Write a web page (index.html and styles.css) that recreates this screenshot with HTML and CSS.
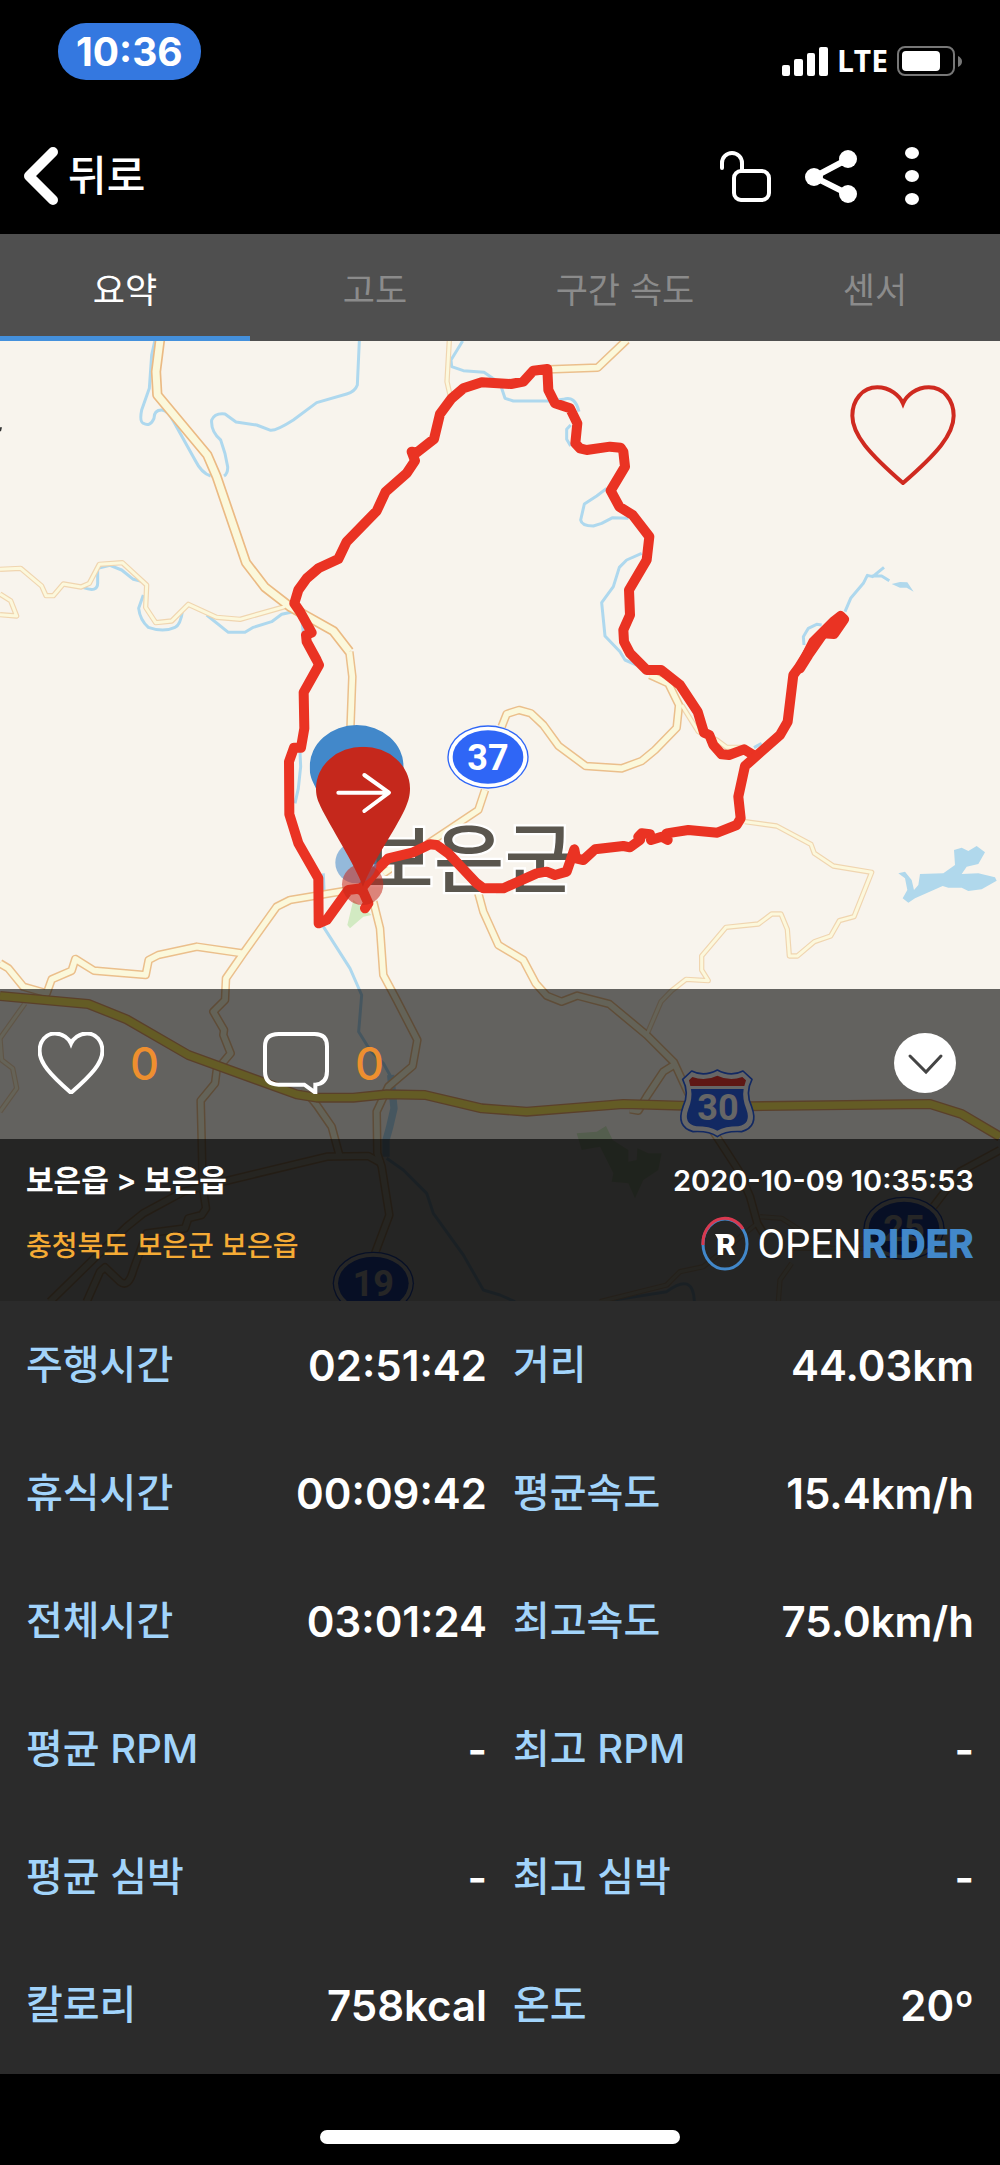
FILE: index.html
```html
<!DOCTYPE html>
<html lang="ko">
<head>
  <meta charset="UTF-8" />
  <meta name="viewport" content="width=device-width, initial-scale=1.0"/>
  <title>OPENRIDER</title>
  <link rel="stylesheet" href="styles.css">
</head>
<body>

<!-- shared shapes -->
<svg class="defs" aria-hidden="true">
  <symbol id="heart" viewBox="0 0 320 302">
    <path vector-effect="non-scaling-stroke" d="M160 56C150 32 120 7 82 7C38 7 7 45 7 93C7 150 58 207 160 296C262 207 313 150 313 93C313 45 282 7 238 7C200 7 170 32 160 56Z"/>
  </symbol>
  <symbol id="pin" viewBox="0 0 282 420">
    <path d="M141 420C118 355 40 235 14 180C3 157 0 145 0 125A141 125 0 0 1 282 125C282 145 279 160 267 187C238 250 164 355 141 420Z"/>
  </symbol>
</svg>

<div class="status">
  <span class="clock">10:36</span>
  <div class="status-icons">
    <svg width="46" height="30" viewBox="0 0 46 30" fill="#fff">
      <rect x="0" y="19" width="8" height="11" rx="2"/>
      <rect x="12" y="13" width="9" height="17" rx="2"/>
      <rect x="25" y="7" width="8" height="23" rx="2"/>
      <rect x="37" y="1" width="9" height="29" rx="2"/>
    </svg>
    <span class="lte">LTE</span>
    <svg width="65" height="30" viewBox="0 0 65 30">
      <rect x="1" y="1" width="56" height="28" rx="7" fill="none" stroke="#777" stroke-width="2"/>
      <rect x="5" y="5" width="38" height="20" rx="4" fill="#fff"/>
      <path d="M61 10q4 2 4 5.500t-4 5.500z" fill="#777"/>
    </svg>
  </div>
</div>

<header class="topbar">
  <button class="back">
    <svg width="34" height="58" viewBox="0 0 34 58"><path d="M29 5L5 29L29 53" fill="none" stroke="#fff" stroke-width="10" stroke-linecap="round" stroke-linejoin="round"/></svg>
    뒤로
  </button>
  <div class="tools">
    <button aria-label="잠금 해제">
      <svg width="51" height="53" viewBox="0 0 51 53" fill="none" stroke="#fff" stroke-width="4" stroke-linecap="round">
        <rect x="14" y="21" width="35" height="29" rx="7"/>
        <path d="M2 18V13a10 10 0 0 1 20 0v8"/>
      </svg>
    </button>
    <button aria-label="공유">
      <svg width="52" height="53" viewBox="0 0 52 53">
        <path d="M43 9L9 27L43 44" fill="none" stroke="#fff" stroke-width="6"/>
        <g fill="#fff"><circle cx="43" cy="9" r="9"/><circle cx="9" cy="27" r="9"/><circle cx="43" cy="44" r="9"/></g>
      </svg>
    </button>
    <button aria-label="더보기">
      <svg width="42" height="58" viewBox="0 0 42 58" fill="#fff">
        <ellipse cx="21" cy="6" rx="7" ry="6"/><ellipse cx="21" cy="29" rx="7" ry="6"/><ellipse cx="21" cy="52" rx="7" ry="6"/>
      </svg>
    </button>
  </div>
</header>

<nav class="tabs">
  <button class="active">요약</button>
  <button>고도</button>
  <button>구간 속도</button>
  <button>센서</button>
</nav>

<section class="map">
  <svg class="map-canvas" viewBox="0 3 3000 2880" aria-hidden="true">
    <defs>
      <g id="water">
        <path d="M465 0L455 45L448 145L425 210Q418 245 430 250Q450 262 462 235Q462 210 485 210Q502 210 520 243L585 360Q605 400 632 408"/>
        <path d="M1078 3L1072 135Q1065 155 1040 162L950 188L880 240Q830 272 812 271L770 255L708 246L675 222Q645 218 635 240Q632 275 662 300Q677 340 683 380Q684 400 672 408"/>
        <path d="M1388 3L1353 60L1355 80L1390 92L1452 97L1500 130L1515 175L1540 183H1650L1690 178Q1725 165 1737 215M1712 255L1700 268V298L1712 318"/>
        <path d="M1820 445L1790 468L1753 492L1742 540Q1745 558 1780 558L1805 550L1838 533L1885 535"/>
        <path d="M1925 640L1880 660L1858 682L1840 740L1805 788L1815 888L1860 935L1875 960L1910 975"/>
        <path d="M2535 815L2552 775L2590 730L2602 706L2618 710L2652 682M2615 708L2645 708L2668 722M2412 915L2410 890L2425 865L2450 853L2465 855"/>
        <path d="M250 743Q293 758 293 730V685L330 676L365 690L400 718L430 725M430 765L416 805Q420 840 445 862Q490 878 525 862Q542 855 548 810M620 825L685 877H735L760 862L815 845L845 823L880 815M905 830L910 880"/>
        <path d="M900 1235L902 1280L895 1345L885 1390M970 1600L972 1650M970 1760L1050 1885L1085 1965L1076 2075L1110 2130L1150 2170L1175 2215"/>
        <path d="M1160 2455L1210 2490L1280 2560L1300 2620L1390 2745L1450 2850L1500 2865L1545 2885M1830 2882L2000 2855Q2080 2795 2083 2885M2262 1223L2285 1210"/>
      </g>
      <g id="thin">
        <path d="M0 688L62 685L125 738L138 767H160L190 732L243 741L268 730L298 673L367 668L440 735L437 802L467 848L515 843L565 793L650 832L720 838L855 800"/>
        <path d="M0 762L32 782L50 828L0 824M1348 0L1341 125L1350 165M75 1990L0 2095L5 2160L38 2185L50 2245L0 2315"/>
        <path d="M2045 1095L2095 1175L2150 1200L2180 1222H2240"/>
        <path d="M1940 2085L1983 1985L2015 1952L2058 1918L2125 1922L2105 1890V1848L2178 1762L2275 1752L2315 1722H2343L2362 1768L2368 1848H2392L2443 1805L2492 1788L2518 1742L2562 1730L2615 1597L2500 1578L2443 1540L2433 1513L2330 1458L2235 1445"/>
        <path d="M2272 2650L2110 2780L2040 2795L2000 2835L1800 2885M2280 2630L2345 2635L2400 2670M2375 2770L2340 2820L2335 2885M2370 2725H2620"/>
      </g>
      <g id="roads">
        <path d="M1645 88L1793 83L1880 0"/>
        <path d="M1048 935L1057 1010L1050 1200M1120 1685L1140 1765L1150 1905L1190 1980L1252 2100L1238 2178L1165 2240L1130 2315L1132 2440L1145 2480L1168 2625L1125 2740"/>
        <path d="M0 1870L25 1885L70 1940L140 1960L155 1918L215 1892L226 1857L282 1892L437 1905L446 1860L475 1845L590 1820L727 1840"/>
        <path d="M1050 1650L870 1680L830 1700L730 1840L678 1915L675 1980L640 2015L672 2070L670 2085L692 2140L650 2190L645 2230L602 2282L605 2400L608 2540L618 2605L605 2625L565 2635L555 2665L440 2680L400 2790Q385 2845 360 2825L315 2782L300 2795L260 2885"/>
        <path d="M150 2885L380 2660L430 2620L550 2555L690 2520L980 2450L1105 2448L1145 2470M910 2245L950 2295L995 2360L1018 2445"/>
        <path d="M1505 1160L1520 1122L1557 1110L1593 1120L1630 1155L1675 1217L1757 1278L1865 1285L1925 1263L1965 1230L2030 1163L2037 1095L2005 1030L1950 1005"/>
        <path d="M1455 1350L1435 1410L1300 1500L1150 1600M1435 1660L1450 1715L1495 1815L1570 1860L1607 1930L1640 1967L1685 1985L1732 1967L1828 1992L1940 2085L2022 2167L2065 2260L2150 2390L2215 2490L2250 2570L2272 2650L2290 2680"/>
        <path d="M2022 2175L1990 2195L1940 2270L1915 2312L1890 2308M3000 2430L2880 2495L2800 2600"/>
      </g>
      <path id="mainroad" d="M480 0L468 95L472 165L622 345L650 410L738 668L795 742L870 800L1000 873L1048 935"/>
      <path id="highway" d="M0 1968L265 1992L380 2038L565 2145L890 2263L950 2273H1060L1160 2263L1275 2265L1445 2305L1580 2315L1870 2292L2150 2300L2790 2292L2885 2322L3000 2390"/>
      <g id="oval">
        <ellipse rx="122" ry="95" fill="#2f66f6"/>
        <ellipse rx="118" ry="91" fill="#fff"/>
        <ellipse rx="106" ry="80" fill="#2f66f6"/>
      </g>
    </defs>

    <rect y="3" width="3000" height="2880" fill="#f8f4ed"/>
    <path d="M0 262H6L3 274H0Z" fill="#333"/>

    <!-- parks and lakes -->
    <g fill="#d2eac2">
      <path d="M1730 2380L1790 2375L1818 2358L1838 2400L1885 2430V2465L1910 2460L1912 2425L1945 2440H1985L1975 2490L1930 2520L1905 2575L1885 2530L1835 2525L1840 2500L1800 2420L1745 2430Z"/>
      <path d="M1060 1680L1115 1725L1090 1730L1050 1765L1042 1755Z"/>
    </g>
    <g fill="#b0d8ec">
      <path d="M2675 732L2700 726L2722 727L2741 755L2720 743H2700Z"/>
      <path d="M2695 1600L2715 1595L2735 1620L2742 1650L2755 1635L2760 1602L2830 1600L2865 1575L2862 1530L2885 1523L2905 1533L2930 1518L2955 1537L2935 1572L2900 1580L2885 1602L2935 1600L2985 1612L2990 1622L2945 1648L2905 1653L2885 1643H2845L2828 1638L2745 1675L2725 1688L2708 1675L2722 1650L2715 1615Z"/>
    </g>
    <use href="#water" class="water"/>
    <path d="M1172 2205L1182 2305L1168 2365L1158 2400V2450" class="river"/>

    <!-- roads: casing first, then fill -->
    <use href="#thin" class="thin-case"/>
    <use href="#roads" class="road-case"/>
    <use href="#mainroad" class="main-case"/>
    <use href="#thin" class="thin-fill"/>
    <use href="#roads" class="road-fill"/>
    <use href="#mainroad" class="main-fill"/>
    <use href="#highway" class="highway-case"/>
    <use href="#highway" class="highway-fill"/>

    <!-- road numbers -->
    <use href="#oval" x="1464" y="1251"/>
    <use href="#oval" x="1120" y="2830"/>
    <use href="#oval" x="2712" y="2665"/>
    <g stroke-linejoin="round">
      <path d="M2075 2193Q2112 2212 2152 2190Q2192 2212 2229 2193L2256 2218Q2235 2258 2255 2300Q2277 2360 2225 2375Q2177 2372 2152 2390Q2127 2372 2079 2375Q2027 2360 2049 2300Q2069 2258 2048 2218Z" fill="#fff" stroke="#2f66f6" stroke-width="5"/>
      <path d="M2077 2211Q2115 2225 2152 2207Q2189 2225 2227 2211L2238 2221L2233 2238H2071L2067 2221Z" fill="#ea3b32"/>
      <path d="M2073 2247H2231Q2226 2275 2239 2307Q2255 2352 2215 2359Q2175 2359 2152 2372Q2129 2359 2089 2359Q2049 2352 2065 2307Q2078 2275 2073 2247Z" fill="#2f66f6"/>
    </g>
    <g class="road-no">
      <text x="1464" y="1290">37</text>
      <text x="1120" y="2867">19</text>
      <text x="2712" y="2702">25</text>
      <text x="2154" y="2339">30</text>
    </g>

    <text class="place" x="1090" y="1640">보은군</text>

    <!-- recorded track -->
    <g class="track">
      <path d="M1095 1705L1105 1690L1085 1645L1045 1650L980 1740L956 1750L955 1615L895 1510L868 1423L867 1265L882 1223L903 1223L913 1165L911 1057L957 975L950 960L920 905L918 885L935 878L900 815L883 790L895 750L920 715L955 685L1015 657L1040 605L1130 513L1157 455L1220 400L1245 362L1235 335L1250 338L1302 297L1320 222L1355 175L1390 145L1445 127L1533 132L1570 125L1600 92L1642 87L1645 150L1665 190L1710 205L1732 250L1726 310L1740 325L1760 330L1830 320L1862 323L1870 335L1875 380L1832 452L1858 500L1898 525L1948 590L1940 660L1887 750L1890 825L1870 870L1872 905L1890 940L1940 990L1983 990L2040 1035L2093 1115L2112 1178L2128 1185L2140 1215L2165 1243L2187 1245L2232 1228L2260 1245"/>
      <path d="M2522 832L2445 905L2395 985L2380 1005L2363 1145L2340 1185L2235 1278L2215 1370L2222 1435L2210 1455L2152 1478L2065 1470L2000 1480L2003 1500L1985 1490L1953 1500L1950 1483L1925 1480L1915 1490L1920 1500L1890 1522L1870 1518L1785 1528L1750 1560L1728 1555L1723 1528L1700 1595L1665 1605L1640 1595L1610 1600L1510 1645H1450L1430 1630L1345 1540L1310 1515L1290 1513L1240 1537L1165 1555L1130 1590L1080 1650"/>
      <path d="M2400 985L2440 905L2500 845L2522 828L2532 838L2502 882L2470 880L2425 945Z" fill="#ea3323"/>
    </g>

    <!-- start and finish pins -->
    <circle cx="1068" cy="1568" r="62" fill="#4288ca" opacity="0.55"/>
    <circle cx="1088" cy="1633" r="62" fill="#c5281c" opacity="0.55"/>
    <use href="#pin" x="929" y="1155" width="282" height="420" fill="#4288ca"/>
    <use href="#pin" x="948" y="1220" width="282" height="420" fill="#c5281c"/>
    <path d="M1015 1358H1165M1093 1305L1167 1358L1093 1413" fill="none" stroke="#fff" stroke-width="12" stroke-linecap="round" stroke-linejoin="round"/>
  </svg>

  <button class="favorite" aria-label="즐겨찾기"><svg width="106" height="100"><use href="#heart"/></svg></button>

  <div class="overlay">
    <div class="actions">
      <button class="action"><svg width="66" height="62"><use href="#heart"/></svg>0</button>
      <button class="action">
        <svg width="66" height="62" viewBox="0 0 198 186"><path d="M47 6H155Q192 6 192 43V118Q192 155 157 158V182L124 158H47Q6 158 6 118V43Q6 6 47 6Z"/></svg>0
      </button>
      <button class="collapse" aria-label="접기">
        <svg width="63" height="61" viewBox="0 0 63 61"><ellipse cx="31" cy="30" rx="31" ry="30" fill="#fff"/><path d="M16 23L32 39L47 23" fill="none" stroke="#444" stroke-width="3" stroke-linecap="round"/></svg>
      </button>
    </div>
    <div class="info">
      <div class="info-row">
        <span class="course">보은읍 &gt; 보은읍</span>
        <time>2020-10-09 10:35:53</time>
      </div>
      <div class="info-row">
        <span class="region">충청북도 보은군 보은읍</span>
        <div class="brand">
          <svg width="48" height="56" viewBox="0 0 48 56">
            <g fill="none" stroke-width="3">
              <ellipse cx="24" cy="28" rx="22" ry="25" stroke="#4288ca"/>
              <path d="M2 29A22 25 0 0 1 42 13" stroke="#d9394f"/>
            </g>
            <text x="25" y="39" class="brand-r">R</text>
            <path d="M14 18H20V23H17Z" fill="#fff"/>
          </svg>
          <span>OPEN<b>RIDER</b></span>
        </div>
      </div>
    </div>
  </div>
</section>

<section class="stats">
  <table>
    <tbody>
      <tr><th>주행시간</th><td>02:51:42</td><th>거리</th><td>44.03km</td></tr>
      <tr><th>휴식시간</th><td>00:09:42</td><th>평균속도</th><td>15.4km/h</td></tr>
      <tr><th>전체시간</th><td>03:01:24</td><th>최고속도</th><td>75.0km/h</td></tr>
      <tr><th>평균 RPM</th><td>-</td><th>최고 RPM</th><td>-</td></tr>
      <tr><th>평균 심박</th><td>-</td><th>최고 심박</th><td>-</td></tr>
      <tr><th>칼로리</th><td>758kcal</td><th>온도</th><td>20º</td></tr>
    </tbody>
  </table>
</section>

<footer class="home"><div class="home-bar"></div></footer>

</body>
</html>
```

FILE: styles.css
```css
* {
  box-sizing: border-box;
}

body {
  margin: 0;
  background: #000;
  color: #fff;
  font-family: Inter, "Noto Sans CJK KR", sans-serif;
}

button {
  padding: 0;
  border: 0;
  background: none;
  color: inherit;
  font: inherit;
}

svg {
  display: block;
}

.defs {
  position: absolute;
  width: 0;
  height: 0;
}

/* status bar */
.status {
  display: flex;
  justify-content: space-between;
  align-items: flex-start;
  height: 120px;
  padding: 23px 38px 0 58px;
}

.clock {
  padding: 0 18px;
  border-radius: 28px;
  background: #3478e0;
  font-size: 39px;
  font-weight: 700;
  line-height: 57px;
}

.status-icons {
  display: flex;
  align-items: center;
  gap: 9px;
  height: 30px;
  margin-top: 23px;
}

.lte {
  font-family: "Open Sans", sans-serif;
  font-size: 30px;
  font-weight: 700;
  line-height: 30px;
}

/* top bar */
.topbar {
  display: flex;
  justify-content: space-between;
  align-items: center;
  height: 114px;
  padding: 0 67px 2px 24px;
}

.back {
  display: flex;
  align-items: center;
  gap: 10px;
  font-size: 42px;
  font-weight: 500;
  line-height: 58px;
}

.tools {
  display: flex;
  align-items: center;
  gap: 34px;
}

/* tabs */
.tabs {
  display: grid;
  grid-template-columns: repeat(4, 1fr);
  height: 107px;
  background: #4f4f4f;
}

.tabs button {
  color: #8b8b8b;
  font-size: 35px;
}

.tabs .active {
  color: #fff;
  box-shadow: inset 0 -5px #4490dc;
}

/* map */
.map {
  display: grid;
}

.map-canvas,
.favorite,
.overlay {
  grid-area: 1 / 1;
}

.map-canvas {
  width: 100%;
}

.map-canvas use,
.map-canvas .river,
.track {
  stroke-linejoin: round;
}

.water, .river { fill: none; stroke: #aed8ee; stroke-width: 9; }
.river { stroke-width: 22; }
.thin-case { fill: none; stroke: #f0d5b0; stroke-width: 16; }
.thin-fill { fill: none; stroke: #fcf8dc; stroke-width: 9; }
.road-case { fill: none; stroke: #ebbf8c; stroke-width: 26; }
.road-fill { fill: none; stroke: #fbf8db; stroke-width: 17; }
.main-case { fill: none; stroke: #ebba84; stroke-width: 31; }
.main-fill { fill: none; stroke: #fbf8db; stroke-width: 21; }
.highway-case { fill: none; stroke: #e0a06a; stroke-width: 30; }
.highway-fill { fill: none; stroke: #fbe55c; stroke-width: 22; }

.road-no {
  fill: #fff;
  font-family: Roboto, sans-serif;
  font-size: 108px;
  font-weight: 700;
  text-anchor: middle;
}

.place {
  fill: #5a564e;
  stroke: #fff;
  stroke-width: 14;
  paint-order: stroke;
  font-family: "Noto Sans CJK KR", sans-serif;
  font-size: 230px;
  font-weight: 500;
}

.track {
  fill: none;
  stroke: #ea3323;
  stroke-width: 30;
  stroke-linecap: round;
}

.favorite {
  justify-self: end;
  align-self: start;
  margin: 44px 44px 0 0;
  fill: none;
  stroke: #cf2a20;
  stroke-width: 4px;
}

.overlay {
  align-self: end;
}

.actions {
  display: flex;
  align-items: center;
  gap: 104px;
  height: 150px;
  padding: 0 43px 2px 38px;
  background: rgba(0, 0, 0, 0.6);
}

.action {
  display: flex;
  align-items: center;
  gap: 26px;
  color: #ee8f2f;
  font-size: 45px;
  font-weight: 500;
}

.action svg {
  fill: none;
  stroke: #fff;
  stroke-width: 4px;
}

.action svg path {
  vector-effect: non-scaling-stroke;
}

.collapse {
  margin-left: auto;
}

.info {
  display: flex;
  flex-direction: column;
  gap: 4px;
  height: 162px;
  padding: 11px 26px 0 26px;
  background: rgba(0, 0, 0, 0.85);
}

.info-row {
  display: flex;
  justify-content: space-between;
  align-items: center;
  height: 60px;
}

.course {
  font-size: 30px;
  font-weight: 600;
  line-height: 36px;
}

time {
  font-size: 29px;
  font-weight: 600;
}

.region {
  color: #f5ab35;
  font-size: 28px;
  font-weight: 500;
}

.brand {
  display: flex;
  align-items: center;
  gap: 8px;
  font-family: Roboto, sans-serif;
  font-size: 40px;
  font-weight: 400;
}

.brand b {
  color: #4288ca;
  font-weight: 900;
}

.brand-r {
  fill: #fff;
  font-size: 30px;
  font-weight: 900;
  text-anchor: middle;
}

/* ride numbers */
.stats {
  padding: 0 26px 5px 0;
  background: #2b2b2b;
}

.stats table {
  width: 100%;
  table-layout: fixed;
  border-collapse: collapse;
}

.stats tr {
  height: 128px;
}

.stats th {
  padding: 0 0 0 26px;
  color: #a2d4fb;
  font-size: 40px;
  font-weight: 500;
  line-height: 48px;
  text-align: left;
}

.stats td {
  padding: 0;
  font-size: 42px;
  font-weight: 600;
  text-align: right;
}

.home {
  display: flex;
  justify-content: center;
  padding: 56px 0 21px;
}

.home-bar {
  width: 36%;
  height: 14px;
  border-radius: 7px;
  background: #fff;
}
```
